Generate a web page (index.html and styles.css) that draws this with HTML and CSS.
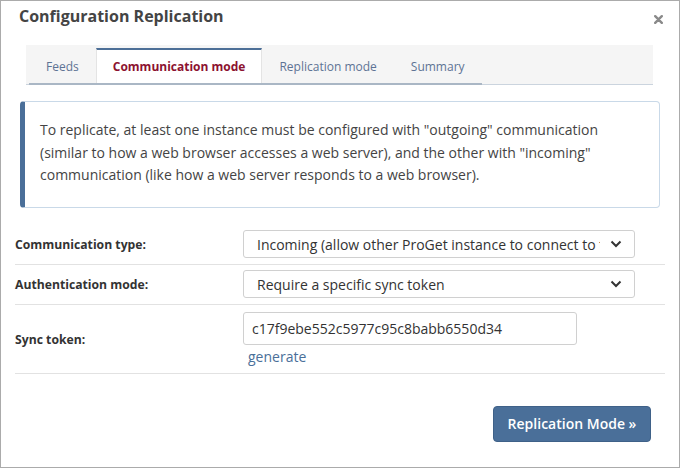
FILE: index.html
```html
<!DOCTYPE html>
<html>
<head>
<meta charset="utf-8">
<link rel="stylesheet" href="styles.css">
</head>
<body>
<div class="dialog">
  <div class="header">
    <h1 class="title">Configuration Replication</h1>
    <svg class="close" width="9" height="9" viewBox="0 0 9 9"><path d="M1.2 1.2 L7.8 7.8 M7.8 1.2 L1.2 7.8" stroke="#8a8a8a" stroke-width="2.4" stroke-linecap="round"/></svg>
  </div>
  <div class="tabbar">
    <ul class="tabs">
      <li class="tab">Feeds</li>
      <li class="tab active">Communication mode</li>
      <li class="tab">Replication mode</li>
      <li class="tab">Summary</li>
    </ul>
  </div>
  <div class="info">
    To replicate, at least one instance must be configured with "outgoing" communication (similar to how a web browser accesses a web server), and the other with "incoming" communication (like how a web server responds to a web browser).
  </div>
  <div class="form">
    <div class="row">
      <div class="label">Communication type:</div>
      <div class="field">
        <div class="select"><span class="sel-text">Incoming (allow other ProGet instance to connect to this one)</span>
          <svg class="chev" width="12" height="8" viewBox="0 0 12 8"><path d="M1.5 1.5 L6 6 L10.5 1.5" fill="none" stroke="#333" stroke-width="2"/></svg>
        </div>
      </div>
    </div>
    <div class="row">
      <div class="label">Authentication mode:</div>
      <div class="field">
        <div class="select"><span class="sel-text">Require a specific sync token</span>
          <svg class="chev" width="12" height="8" viewBox="0 0 12 8"><path d="M1.5 1.5 L6 6 L10.5 1.5" fill="none" stroke="#333" stroke-width="2"/></svg>
        </div>
      </div>
    </div>
    <div class="row tall">
      <div class="label">Sync token:</div>
      <div class="field">
        <div class="input">c17f9ebe552c5977c95c8babb6550d34</div>
        <a class="link">generate</a>
      </div>
    </div>
  </div>
  <div class="footer">
    <button class="btn">Replication Mode &raquo;</button>
  </div>
</div>
</body>
</html>
```

FILE: styles.css
```css
* { box-sizing: border-box; }
html, body { margin: 0; padding: 0; background: #fff; }
body { font-family: "Open Sans", "Noto Sans", sans-serif; color: #444; }
.dialog {
  width: 680px; height: 468px;
  border: 1px solid #ababab;
}
.header { display: flex; justify-content: space-between; align-items: flex-start; padding: 3px 16px 0 18px; height: 44px; }
.title { margin: 0; font-size: 16px; font-weight: 700; color: #444; line-height: 24px; }
.close { margin-top: 11px; }
.tabbar {
  margin: 0 26px 0 25px; background: #f5f5f5; height: 40px;
  border-bottom: 1px solid #cbd4de; padding-left: 3px;
}
.tabs { list-style: none; margin: 0 0 -1px; padding: 0; display: inline-flex; height: 40px; border-bottom: 2px solid #aab7c5; }
.tab { padding: 6px 17px 0; font-size: 12px; color: #5d7394; line-height: 31px; white-space: nowrap; }
.tab.active {
  background: #fff; color: #8c1230; font-weight: 700;
  border-top: 2px solid #4d6f97; border-left: 1px solid #e4e4e4; border-right: 1px solid #e4e4e4;
  margin-top: 3px; padding: 2px 16px 0; line-height: 30px;
}
.info {
  margin: 16px 19px 0 19px; border: 1px solid #c9d9e8; border-left: 5px solid #4a6f99; border-radius: 4px;
  padding: 17px 16px 20px 15px; font-size: 14px; line-height: 22.5px; color: #444;
}
.form { margin: 17px 14px 0 14px; }
.row { display: flex; align-items: center; border-bottom: 1px solid #e2e2e2; height: 40px; }
.row.tall { height: 69px; align-items: flex-start; }
.label { width: 228px; font-size: 12.2px; font-weight: 700; color: #333; }
.row.tall .label { padding-top: 26px; }
.field { flex: none; }
.select {
  width: 392px; height: 28px; border: 1px solid #d0d0d0; border-radius: 3px;
  display: flex; align-items: center; padding: 0 12px 0 13px; font-size: 14px; color: #333;
}
.sel-text { flex: 1; white-space: nowrap; overflow: hidden; }
.chev { margin-left: 10px; flex: none; }
.input {
  margin-top: 7px; width: 334px; height: 33px; border: 1px solid #d0d0d0; border-radius: 3px;
  padding: 0 0 0 8px; line-height: 31px; font-size: 14px; color: #333;
}
.link { display: block; color: #4a6f99; font-size: 14px; margin: 2px 0 0 5px; }
.footer { display: flex; justify-content: flex-end; padding: 32px 28px 0 0; }
.btn {
  background: #4a6f99; color: #fff; border: 1px solid #3f6188; border-radius: 4px; white-space: nowrap;
  font-family: inherit; font-weight: 600; font-size: 14px; height: 36px; padding: 0 10px; width: 158px;
}
```
